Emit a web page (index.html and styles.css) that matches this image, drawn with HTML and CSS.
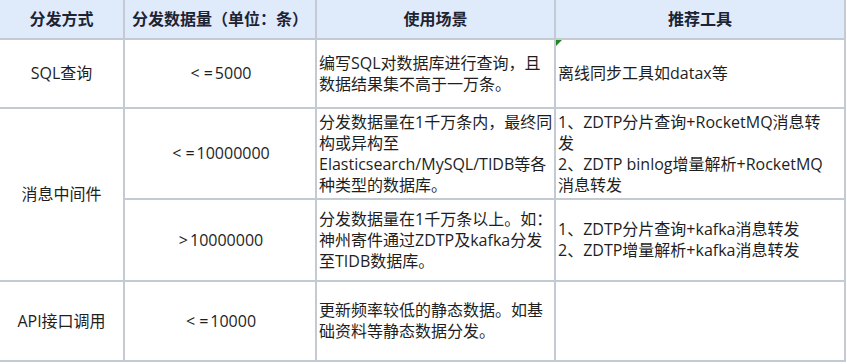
FILE: index.html
```html
<!DOCTYPE html>
<html lang="zh-CN">
<head>
    <meta charset="UTF-8">
    <meta name="viewport" content="width=device-width, initial-scale=1.0">
    <title>分发方式</title>
    <link rel="stylesheet" href="styles.css">
</head>
<body>
    <table class="grid">
        <colgroup>
            <col class="c-way">
            <col class="c-size">
            <col class="c-scene">
            <col class="c-tool">
        </colgroup>
        <thead>
            <tr class="head">
                <th>分发方式</th>
                <th>分发数据量（单位：条）</th>
                <th>使用场景</th>
                <th>推荐工具</th>
            </tr>
        </thead>
        <tbody>
            <tr class="r-sql">
                <td class="mid">SQL查询</td>
                <td class="mid"><span class="op">&lt;</span><span class="op">=</span>5000</td>
                <td>编写SQL对数据库进行查询，且<br>数据结果集不高于一万条。</td>
                <td class="noted"><span class="mark"></span> 离线同步工具如datax等</td>
            </tr>
            <tr class="r-mq1">
                <td class="mid" rowspan="2">消息中间件</td>
                <td class="mid"><span class="op">&lt;</span><span class="op">=</span>10000000</td>
                <td>分发数据量在1千万条内，最终同<br>构或异构至<br>Elasticsearch/MySQL/TIDB等各<br>种类型的数据库。</td>
                <td>1、ZDTP分片查询+RocketMQ消息转<br>发<br>2、ZDTP binlog增量解析+RocketMQ<br>消息转发</td>
            </tr>
            <tr class="r-mq2">
                <td class="mid"><span class="op">&gt;</span>10000000</td>
                <td>分发数据量在1千万条以上。如：<br>神州寄件通过ZDTP及kafka分发<br>至TIDB数据库。</td>
                <td>1、ZDTP分片查询+kafka消息转发<br>2、ZDTP增量解析+kafka消息转发</td>
            </tr>
            <tr class="r-api">
                <td class="mid">API接口调用</td>
                <td class="mid"><span class="op">&lt;</span><span class="op">=</span>10000</td>
                <td>更新频率较低的静态数据。如基<br>础资料等静态数据分发。</td>
                <td></td>
            </tr>
        </tbody>
    </table>
</body>
</html>
```

FILE: styles.css
```css
body {
    margin: 0;
    background: #ffffff;
    font-family: "Open Sans", "Noto Sans CJK SC", sans-serif;
    color: #1e1e1e;
}

.grid {
    border-collapse: separate;
    border-spacing: 0;
    table-layout: fixed;
    width: 846px;
    font-size: 16px;
    line-height: 21px;
}

.c-way { width: 125px; }
.c-size { width: 192px; }
.c-scene { width: 239px; }
.c-tool { width: 290px; }

.grid th,
.grid td {
    box-sizing: border-box;
    border-right: 2px solid #c4cad4;
    border-bottom: 2px solid #c4cad4;
    padding: 0 2px;
    vertical-align: middle;
    text-align: left;
    white-space: nowrap;
}

.head th {
    height: 40px;
    background: #dfeafb;
    text-align: center;
    font-weight: 700;
    color: #1c2333;
}

.grid td.mid {
    text-align: center;
}

/* the operators sit apart in the source font */
.op {
    margin: 0 2px;
}

.r-sql td { height: 69px; }
.r-mq1 td { height: 91px; }
.r-mq2 td { height: 82px; }
.r-api td { height: 80px; }

.noted {
    position: relative;
    padding-left: 3px;
}

.mark {
    position: absolute;
    top: 0;
    left: 0;
    width: 0;
    height: 0;
    border-top: 6px solid #1f8a1f;
    border-right: 6px solid transparent;
}
```
